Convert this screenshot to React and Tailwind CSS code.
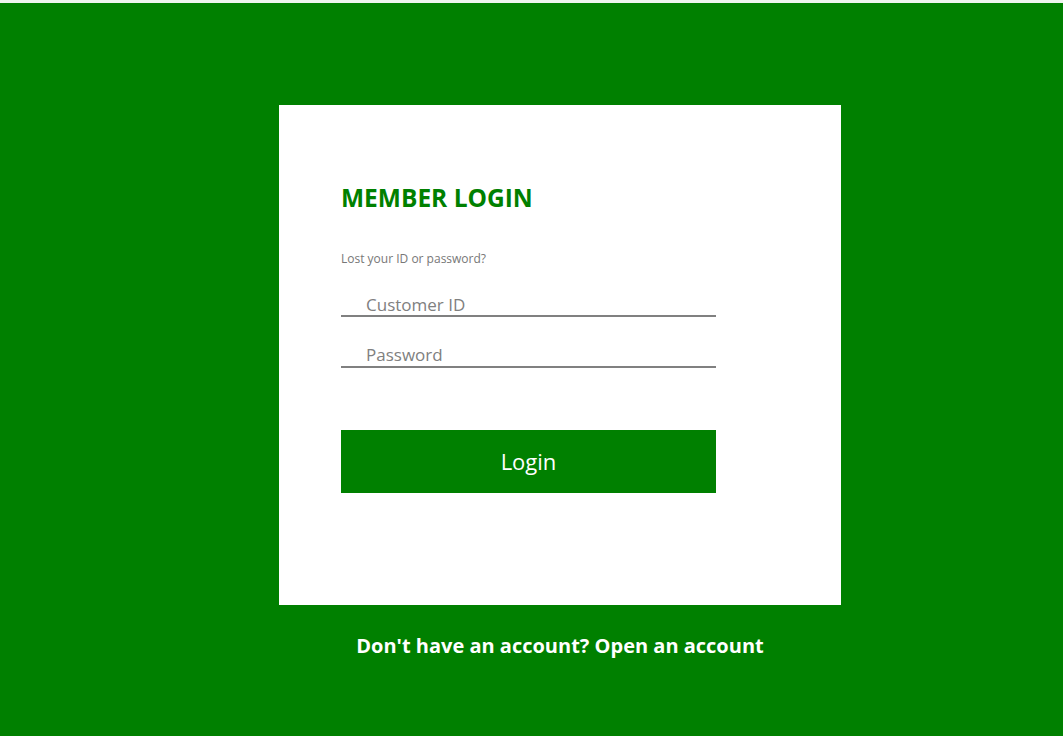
import React from 'react';

const App = () => {
  return (
    <div
      className="min-h-screen bg-[#008000] border-t-[3px] border-[#eef5ee] pl-[57px] pt-[102px] flex flex-col items-center"
      style={{ fontFamily: '"Open Sans", "Noto Sans", sans-serif' }}
    >
      <div className="w-[562px] h-[500px] bg-white pt-[77px] px-[62px]">
        <h2 className="text-[24.5px] leading-8 font-bold text-[#008000]">MEMBER LOGIN</h2>
        <p className="mt-[37px] text-[12px] leading-4 text-[#777777]">Lost your ID or password?</p>
        <form className="w-[375px]" onSubmit={(e) => e.preventDefault()}>
          <input
            type="text"
            placeholder="Customer ID"
            className="mt-[20px] block w-full h-[30px] pt-[6px] border-b-2 border-[#808080] pl-[25px] text-[17px] outline-none placeholder:text-[#808080]"
          />
          <input
            type="password"
            placeholder="Password"
            className="mt-[21px] block w-full h-[30px] pt-[5px] border-b-2 border-[#808080] pl-[25px] text-[17px] outline-none placeholder:text-[#808080]"
          />
          <button
            type="submit"
            className="mt-[62px] w-full h-[63px] bg-[#008000] text-white text-[22px]"
          >
            Login
          </button>
        </form>
      </div>
      <p className="mt-[27px] text-[20px] leading-7 font-bold text-white">
        Don't have an account? Open an account
      </p>
    </div>
  );
};

export default App;
